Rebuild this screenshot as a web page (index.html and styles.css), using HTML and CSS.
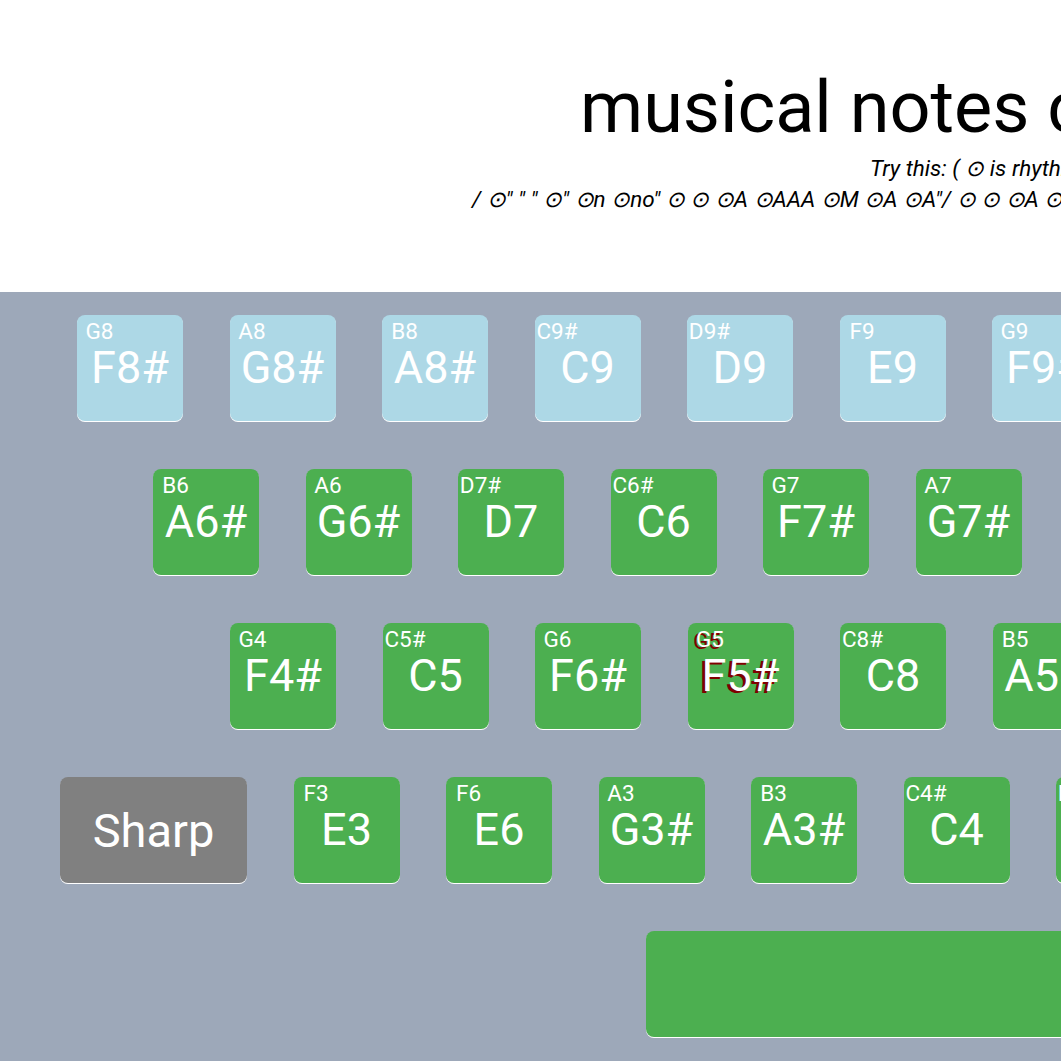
FILE: index.html
```html
<!DOCTYPE html>
<html lang="en">
<head>
<meta charset="utf-8">
<title>musical notes calculator</title>
<link rel="stylesheet" href="styles.css">
</head>
<body>
<header class="head">
  <h1 class="title">musical notes calculator</h1>
  <p class="hint hint-one">Try this: ( ⊙ is rhythm, " is a rest, / is a bar line )</p>
  <p class="hint hint-two">/ ⊙" " " ⊙" ⊙n ⊙no" ⊙ ⊙ ⊙A ⊙AAA ⊙M ⊙A ⊙A"/ ⊙ ⊙ ⊙A ⊙AAA ⊙M ⊙A ⊙A"/ ⊙ ⊙ ⊙A</p>
</header>
<main class="board">
  <div class="row row-one">
    <div class="key blue"><div class="sub">G8</div><div class="main">F8#</div></div>
    <div class="key blue"><div class="sub">A8</div><div class="main">G8#</div></div>
    <div class="key blue"><div class="sub">B8</div><div class="main">A8#</div></div>
    <div class="key blue"><div class="sub">C9#</div><div class="main">C9</div></div>
    <div class="key blue"><div class="sub">D9#</div><div class="main">D9</div></div>
    <div class="key blue"><div class="sub">F9</div><div class="main">E9</div></div>
    <div class="key blue"><div class="sub">G9</div><div class="main">F9#</div></div>
    <div class="key blue"><div class="sub">A9</div><div class="main">G9#</div></div>
  </div>
  <div class="row row-two">
    <div class="key"><div class="sub">B6</div><div class="main">A6#</div></div>
    <div class="key"><div class="sub">A6</div><div class="main">G6#</div></div>
    <div class="key"><div class="sub">D7#</div><div class="main">D7</div></div>
    <div class="key"><div class="sub">C6#</div><div class="main">C6</div></div>
    <div class="key"><div class="sub">G7</div><div class="main">F7#</div></div>
    <div class="key"><div class="sub">A7</div><div class="main">G7#</div></div>
    <div class="key"><div class="sub">B7</div><div class="main">A7#</div></div>
  </div>
  <div class="row row-three">
    <div class="key"><div class="sub">G4</div><div class="main">F4#</div></div>
    <div class="key"><div class="sub">C5#</div><div class="main">C5</div></div>
    <div class="key"><div class="sub">G6</div><div class="main">F6#</div></div>
    <div class="key hl"><div class="sub">G5</div><div class="main">F5#</div></div>
    <div class="key"><div class="sub">C8#</div><div class="main">C8</div></div>
    <div class="key"><div class="sub">B5</div><div class="main">A5#</div></div>
  </div>
  <div class="row row-four">
    <div class="key sharp">Sharp</div>
    <div class="key"><div class="sub">F3</div><div class="main">E3</div></div>
    <div class="key"><div class="sub">F6</div><div class="main">E6</div></div>
    <div class="key"><div class="sub">A3</div><div class="main">G3#</div></div>
    <div class="key"><div class="sub">B3</div><div class="main">A3#</div></div>
    <div class="key"><div class="sub">C4#</div><div class="main">C4</div></div>
    <div class="key"><div class="sub">D4#</div><div class="main">D4</div></div>
  </div>
  <div class="row row-five">
    <div class="key space"></div>
  </div>
</main>
</body>
</html>
```
FILE: styles.css
```css
html, body {
  margin: 0;
  padding: 0;
  overflow: hidden;
  background: #9da8b9;
}
body {
  width: 1061px;
  height: 1061px;
  font-family: Roboto, "Liberation Sans", sans-serif;
}
.head {
  background: #ffffff;
  height: 292px;
  box-sizing: border-box;
  padding-top: 65px;
  white-space: nowrap;
  color: #000;
}
.title {
  margin: 0 0 0 580px;
  font-size: 72px;
  font-weight: 400;
  line-height: normal;
}
.hint {
  margin: 0;
  font-size: 22.5px;
  font-style: italic;
  line-height: 31px;
}
.hint-one {
  margin-left: 870px;
  margin-top: 3px;
}
.hint-two {
  margin-left: 472px;
}
.board {
  padding-top: 23px;
  display: flex;
  flex-direction: column;
  gap: 48px;
}
.row {
  display: flex;
  gap: 46.5px;
  flex-wrap: nowrap;
}
.row-one { padding-left: 77px; }
.row-two { padding-left: 153px; }
.row-three { padding-left: 230px; }
.row-four { padding-left: 60px; }
.row-five { padding-left: 646px; }
.key {
  flex: 0 0 auto;
  width: 106px;
  height: 106px;
  box-sizing: border-box;
  padding-top: 4.7px;
  border-radius: 8px;
  background: #4caf50;
  color: #ffffff;
  box-shadow: 0 1px 0 #ffffff;
}
.key.blue {
  background: #add8e6;
}
.sub {
  width: 45px;
  text-align: center;
  font-size: 22.5px;
  line-height: 23px;
}
.main {
  text-align: center;
  font-size: 45px;
  line-height: 50px;
}
.hl .sub, .hl .main {
  text-shadow: -3px 2px 0 #800000;
}
.key.sharp {
  width: 187px;
  padding-top: 0;
  background: #808080;
  display: flex;
  align-items: center;
  justify-content: center;
  font-size: 47px;
}
.key.space {
  width: 760px;
}
```
